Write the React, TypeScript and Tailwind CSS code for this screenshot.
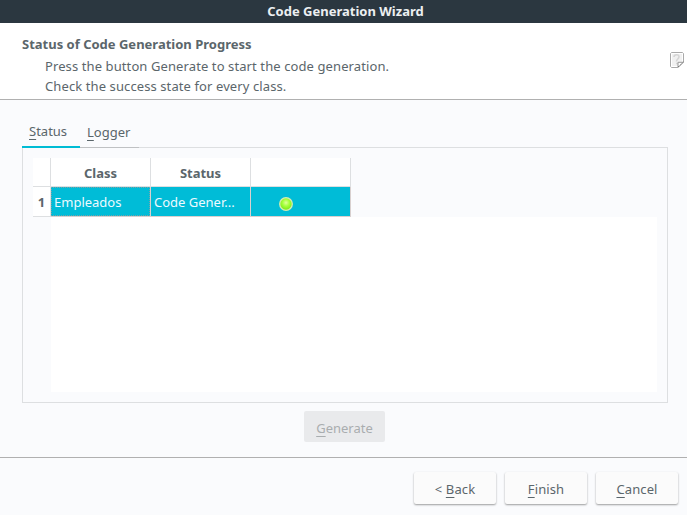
import React from "react";

function Mnemonic({ children }: { children: string }) {
  return (
    <span className="underline decoration-1 underline-offset-[3px] [text-decoration-skip-ink:none]">
      {children}
    </span>
  );
}

function NoteIcon() {
  return (
    <svg width="14" height="16" viewBox="0 0 14 16" fill="none">
      <path d="M1.5 .5h11l1 1v8.7l-5.3 5.3H1.5l-1-1v-13z" fill="#f1f1f1" stroke="#aaa" />
      <path d="M1.5 1.5h11v8l-5 5h-6z" stroke="#fff" />
      <path d="M4 5c0-3 5-3 5-.3C9 7 6.5 7 6.5 9.5M6 11.5h2" stroke="#d5d5d5" strokeWidth="1.6" />
      <path d="M8 15V10.3h5.2" fill="#fff" stroke="#999" />
      <path d="M8 15l5.5-5" stroke="#777" strokeDasharray="2 1" />
    </svg>
  );
}

function StatusLed() {
  return (
    <svg width="14" height="14" viewBox="0 0 14 14">
      <defs>
        <radialGradient id="led" cx=".5" cy=".4" r=".6">
          <stop offset="0" stopColor="#e0ff9c" />
          <stop offset=".45" stopColor="#a6ff3c" />
          <stop offset="1" stopColor="#76e812" />
        </radialGradient>
      </defs>
      <circle cx="7" cy="7" r="6.3" fill="url(#led)" stroke="#d4ecb4" strokeWidth="1.3" />
    </svg>
  );
}

function DialogButton({ children }: { children: React.ReactNode }) {
  return (
    <button className="h-8 w-[82px] rounded-[2px] bg-[#fbfbfb] pt-[2px] leading-[20px] tracking-[0.1px] shadow-[0_1px_2px_rgba(0,0,0,0.38)]">
      {children}
    </button>
  );
}

export default function App() {
  return (
    <div className="flex h-[515px] w-[687px] flex-col overflow-hidden bg-[#fafbfd] font-['Noto_Sans',sans-serif] text-[13px] leading-[20px] text-[#5b666b]">
      <div className="h-[23px] shrink-0 bg-[#2b3740] pl-1 text-center font-bold leading-[23px] text-[#eceff1]">
        Code Generation Wizard
      </div>
      <header className="flex h-[77px] shrink-0 justify-between border-b border-[#b0b0b0] bg-white pl-[22px] pr-[3px]">
        <div className="pt-[11px]">
          <h1 className="font-bold leading-[21px]">Status of Code Generation Progress</h1>
          <p className="pl-[23px] pt-[1px] tracking-[0.1px]">Press the button Generate to start the code generation.</p>
          <p className="pl-[23px] tracking-[0.1px]">Check the success state for every class.</p>
        </div>
        <div className="pt-[29px]"><NoteIcon /></div>
      </header>
      <main className="flex h-[358px] shrink-0 flex-col border-b border-[#b0b0b0] px-[22px] pt-[20px] pr-[19px]">
        <div className="flex h-[28px] shrink-0">
          <div className="z-10 h-[28px] w-[58px] border-b-2 border-[#00bcd4] pl-[7px] pt-[1px]"><Mnemonic>S</Mnemonic>tatus</div>
          <div className="z-10 h-[28px] w-[59px] border-b border-[#bfc1c3] pl-[7px] pt-[2px]"><Mnemonic>L</Mnemonic>ogger</div>
        </div>
        <div className="-mt-px h-[256px] shrink-0 border border-[#dddfe1] pl-[10px] pt-[10px]">
          <div className="grid w-[318px] grid-cols-[18px_100px_100px_100px] grid-rows-[29px_30px] text-center">
            <div className="border-b border-r border-[#dddfe1] bg-white" />
            <div className="border-b border-r border-[#dddfe1] bg-white pt-[5px] font-bold">Class</div>
            <div className="border-b border-r border-[#dddfe1] bg-white pt-[5px] font-bold">Status</div>
            <div className="border-b border-r border-[#dddfe1] bg-white" />
            <div className="border-b border-r border-[#dddfe1] bg-white pt-[5px] font-bold">1</div>
            <div className="border-b border-r border-[#d8d0cf] bg-[#00bcd7]">
              <div className="h-full border border-dotted border-[#7aa3a8] pl-[2px] pt-[4px] text-left text-[#edfaff]">Empleados</div>
            </div>
            <div className="border-b border-r border-[#d8d0cf] bg-[#00bcd7] pl-[3px] pt-[5px] text-left text-[#edfaff]">Code Gener...</div>
            <div className="border-b border-r border-[#d8d0cf] bg-[#00bcd7] pl-[28px] pt-[10px]"><StatusLed /></div>
          </div>
          <div className="ml-[18px] h-[175px] w-[606px] bg-white" />
        </div>
        <button className="ml-[282px] mt-2 h-[31px] w-[81px] shrink-0 rounded-[2px] bg-[#e9eaec] pt-[2px] text-[#a9adaf]"><Mnemonic>G</Mnemonic>enerate</button>
      </main>
      <footer className="flex justify-end gap-[9px] pr-[9px] pt-[14px]">
        <DialogButton>&lt; <Mnemonic>B</Mnemonic>ack</DialogButton>
        <DialogButton><Mnemonic>F</Mnemonic>inish</DialogButton>
        <DialogButton><Mnemonic>C</Mnemonic>ancel</DialogButton>
      </footer>
    </div>
  );
}
